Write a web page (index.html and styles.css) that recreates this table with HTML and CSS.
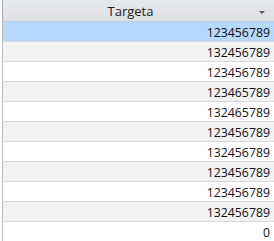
FILE: index.html
```html
<!DOCTYPE html>
<html>
<head>
<meta charset="utf-8">
<link rel="stylesheet" href="styles.css">
</head>
<body>
<div class="grid">
  <div class="head">
    <span class="title">Targeta</span>
    <span class="arrow"></span>
  </div>
  <div class="row sel">123456789</div>
  <div class="row alt">132456789</div>
  <div class="row">123456789</div>
  <div class="row alt">123465789</div>
  <div class="row">132465789</div>
  <div class="row alt">123456789</div>
  <div class="row">132456789</div>
  <div class="row alt">123456789</div>
  <div class="row">123456789</div>
  <div class="row alt">132456789</div>
  <div class="row">0</div>
</div>
</body>
</html>
```
FILE: styles.css
```css
html, body {
  margin: 0;
  padding: 0;
  background: #ffffff;
}
.grid {
  width: 274px;
  height: 241px;
  overflow: hidden;
  font-family: "Open Sans", "Noto Sans", sans-serif;
  color: #111;
}
.head {
  height: 21px;
  border-bottom: 1px solid #c5c9cf;
  background: linear-gradient(#e6e8eb, #dcdfe3);
  display: flex;
  align-items: center;
  border-left: 1px solid #a9adb3;
  margin-left: 2px;
  position: relative;
}
.title {
  flex: 1;
  text-align: center;
  font-size: 13px;
  padding-right: 16px;
  padding-top: 1px;
  color: #222;
}
.arrow {
  position: absolute;
  right: 9px;
  top: 11px;
  width: 0;
  height: 0;
  border-left: 3px solid transparent;
  border-right: 3px solid transparent;
  border-top: 3px solid #555;
}
.row {
  height: 18px;
  padding-top: 1px;
  border-bottom: 1px solid #d4d8de;
  border-left: 1px solid #b8bcc2;
  margin-left: 2px;
  text-align: right;
  padding-right: 4px;
  font-size: 12.3px;
  line-height: 19px;
  box-sizing: content-box;
}
.row.alt {
  background: #f2f2f2;
}
.row.sel {
  background: #b6d8fc;
}
```
